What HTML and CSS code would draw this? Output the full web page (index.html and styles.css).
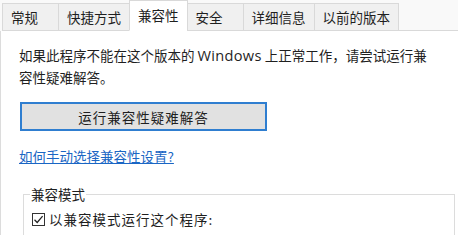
FILE: index.html
```html
<!DOCTYPE html>
<html lang="zh-CN">
<head>
<meta charset="utf-8">
<title>兼容性</title>
<link rel="stylesheet" href="styles.css">
</head>
<body>
<div class="window">
  <div class="tabs">
    <div class="tab tab-first">常规</div>
    <div class="tab">快捷方式</div>
    <div class="tab tab-active">兼容性</div>
    <div class="tab">安全</div>
    <div class="tab">详细信息</div>
    <div class="tab">以前的版本</div>
    <div class="tab-fill"></div>
  </div>
  <div class="panel">
    <p class="desc">如果此程序不能在这个版本的 <span class="latin">Windows</span> 上正常工作，请尝试运行兼<br>容性疑难解答。</p>
    <button class="btn" type="button">运行兼容性疑难解答</button>
    <div class="link-row"><a class="link" href="#">如何手动选择兼容性设置?</a></div>
    <fieldset class="group">
      <legend class="group-title">兼容模式</legend>
      <label class="check">
        <span class="box"><svg width="11" height="11" viewBox="0 0 11 11"><path d="M1.5 5.8 L4.2 8.5 L9.6 2.2" fill="none" stroke="#222" stroke-width="1.3"/></svg></span>
        <span class="check-text">以兼容模式运行这个程序:</span>
      </label>
    </fieldset>
  </div>
</div>
</body>
</html>
```

FILE: styles.css
```css
html, body {
  margin: 0;
  padding: 0;
  background: #ffffff;
}
body {
  font-family: "Noto Sans CJK SC", "Noto Sans", sans-serif;
  font-size: 13.5px;
  color: #1f1f1f;
  width: 458px;
  height: 235px;
  overflow: hidden;
}
.window {
  width: 458px;
}
.tabs {
  display: flex;
  align-items: flex-end;
  height: 31px;
  background: #f9f9f9;
  padding-left: 2px;
  box-sizing: border-box;
}
.tab {
  box-sizing: border-box;
  height: 28px;
  line-height: 26px;
  padding: 0 8px;
  min-width: 57px;
  background: #f0f0f0;
  border: 1px solid #d9d9d9;
  margin-left: -1px;
  white-space: nowrap;
}
.tab-first {
  margin-left: 0;
}
.tab-active {
  height: 31px;
  line-height: 28px;
  background: #ffffff;
  border-bottom-color: #ffffff;
}
.tab-fill {
  flex: 1;
  height: 1px;
  background: #d9d9d9;
}
.panel {
  border-left: 1px solid #dcdcdc;
  padding: 13px 0 0 18px;
  height: 204px;
  box-sizing: border-box;
}
.desc {
  margin: 0;
  line-height: 22px;
  white-space: nowrap;
}
.latin {
  font-family: "Open Sans", "Noto Sans", sans-serif;
  font-size: 14.6px;
  letter-spacing: 0.3px;
}
.btn {
  display: block;
  margin: 14px 0 0 1px;
  width: 247px;
  height: 29px;
  box-sizing: border-box;
  background: #e1e1e1;
  border: 2px solid #2f7ed0;
  font-family: inherit;
  font-size: 13.5px;
  letter-spacing: 1px;
  color: #1f1f1f;
  padding: 0;
}
.link-row {
  margin-top: 15px;
  line-height: 20px;
}
.link {
  color: #1a66c4;
  text-decoration: underline;
}
.group {
  margin: 19px 3px 0 4px;
  border: 1px solid #dcdcdc;
  padding: 0 8px 10px 8px;
}
.group-title {
  margin-left: -2px;
  padding: 0 1px;
  line-height: 18px;
}
.check {
  display: flex;
  align-items: center;
  gap: 4px;
  margin-top: 6px;
  line-height: 20px;
}
.check-text {
  letter-spacing: 1px;
}
.box {
  width: 13px;
  height: 13px;
  box-sizing: border-box;
  border: 1px solid #333333;
  background: #ffffff;
  display: flex;
  align-items: center;
  justify-content: center;
}
.box svg {
  display: block;
}
```
